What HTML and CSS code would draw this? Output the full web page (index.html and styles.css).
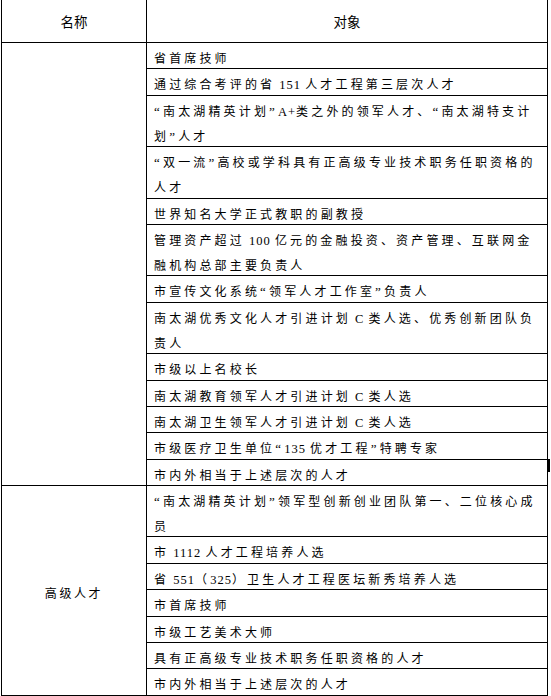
FILE: index.html
```html
<!DOCTYPE html>
<html lang="zh-CN">
<head>
<meta charset="utf-8">
<title>人才分类</title>
<link rel="stylesheet" href="styles.css">
</head>
<body>
<div class="page">
<table class="talent">
  <colgroup><col class="c-name"><col class="c-obj"></colgroup>
  <thead>
    <tr><th>名称</th><th>对象</th></tr>
  </thead>
  <tbody>
    <tr><td class="name" rowspan="13"></td><td><div class="t">省首席技师</div></td></tr>
    <tr><td><div class="t">通过综合考评的省<span class="lat"> 151 </span>人才工程第三层次人才</div></td></tr>
    <tr><td><div class="t"><span class="q">“</span>南太湖精英计划<span class="q">”</span><span class="lat">A+</span>类之外的领军人才、<span class="q">“</span>南太湖特支计<br>划<span class="q">”</span>人才</div></td></tr>
    <tr><td><div class="t"><span class="q">“</span>双一流<span class="q">”</span>高校或学科具有正高级专业技术职务任职资格的<br>人才</div></td></tr>
    <tr><td><div class="t">世界知名大学正式教职的副教授</div></td></tr>
    <tr><td><div class="t">管理资产超过<span class="lat"> 100 </span>亿元的金融投资、资产管理、互联网金<br>融机构总部主要负责人</div></td></tr>
    <tr><td><div class="t">市宣传文化系统<span class="q">“</span>领军人才工作室<span class="q">”</span>负责人</div></td></tr>
    <tr><td><div class="t">南太湖优秀文化人才引进计划<span class="lat"> C </span>类人选、优秀创新团队负<br>责人</div></td></tr>
    <tr><td><div class="t">市级以上名校长</div></td></tr>
    <tr><td><div class="t">南太湖教育领军人才引进计划<span class="lat"> C </span>类人选</div></td></tr>
    <tr><td><div class="t">南太湖卫生领军人才引进计划<span class="lat"> C </span>类人选</div></td></tr>
    <tr><td><div class="t">市级医疗卫生单位<span class="q">“</span><span class="lat">135 </span>优才工程<span class="q">”</span>特聘专家</div></td></tr>
    <tr><td><div class="t">市内外相当于上述层次的人才</div></td></tr>
    <tr><td class="name" rowspan="7"><div class="t">高级人才</div></td><td><div class="t"><span class="q">“</span>南太湖精英计划<span class="q">”</span>领军型创新创业团队第一、二位核心成<br>员</div></td></tr>
    <tr><td><div class="t">市<span class="lat"> 1112 </span>人才工程培养人选</div></td></tr>
    <tr><td><div class="t">省<span class="lat"> 551</span>（<span class="lat">325</span>）卫生人才工程医坛新秀培养人选</div></td></tr>
    <tr><td><div class="t">市首席技师</div></td></tr>
    <tr><td><div class="t">市级工艺美术大师</div></td></tr>
    <tr><td><div class="t">具有正高级专业技术职务任职资格的人才</div></td></tr>
    <tr><td><div class="t">市内外相当于上述层次的人才</div></td></tr>
  </tbody>
</table>
<div class="edge-mark"></div>
</div>
</body>
</html>
```
FILE: styles.css
```css
html, body {
  margin: 0;
  padding: 0;
  background: #fff;
}
.page {
  position: relative;
  width: 551px;
  height: 696px;
  overflow: hidden;
}
.talent {
  border-collapse: collapse;
  table-layout: fixed;
  width: 547px;
  margin: -1px 0 0 1px;
  color: #000;
  font-family: "Noto Sans CJK SC", sans-serif;
}
.c-name { width: 145px; }
.talent th,
.talent td {
  border: 1px solid #000;
  padding: 0;
}
.talent th {
  height: 42px;
  font-size: 13.5px;
  line-height: 20px;
  font-weight: 400;
  text-align: center;
  vertical-align: middle;
}
.talent td {
  padding: 0 0 0.4px 7px;
  font-size: 12px;
  letter-spacing: 3.15px;
  white-space: nowrap;
  text-align: left;
  vertical-align: middle;
}
.talent td.name {
  padding: 0;
  text-align: center;
  letter-spacing: 2.6px;
}
.t {
  line-height: 25px;
  padding-top: 2px;
  margin-bottom: -2px;
}
.lat {
  font-family: "Liberation Serif", serif;
  font-size: 12.5px;
  line-height: 1;
  letter-spacing: 1px;
}
.q {
  font-family: "Liberation Serif", serif;
  font-size: 13px;
  line-height: 1;
  letter-spacing: 3.2px;
}
.edge-mark {
  position: absolute;
  left: 547px;
  top: 459px;
  width: 3px;
  height: 13px;
  background: #000;
}
```
